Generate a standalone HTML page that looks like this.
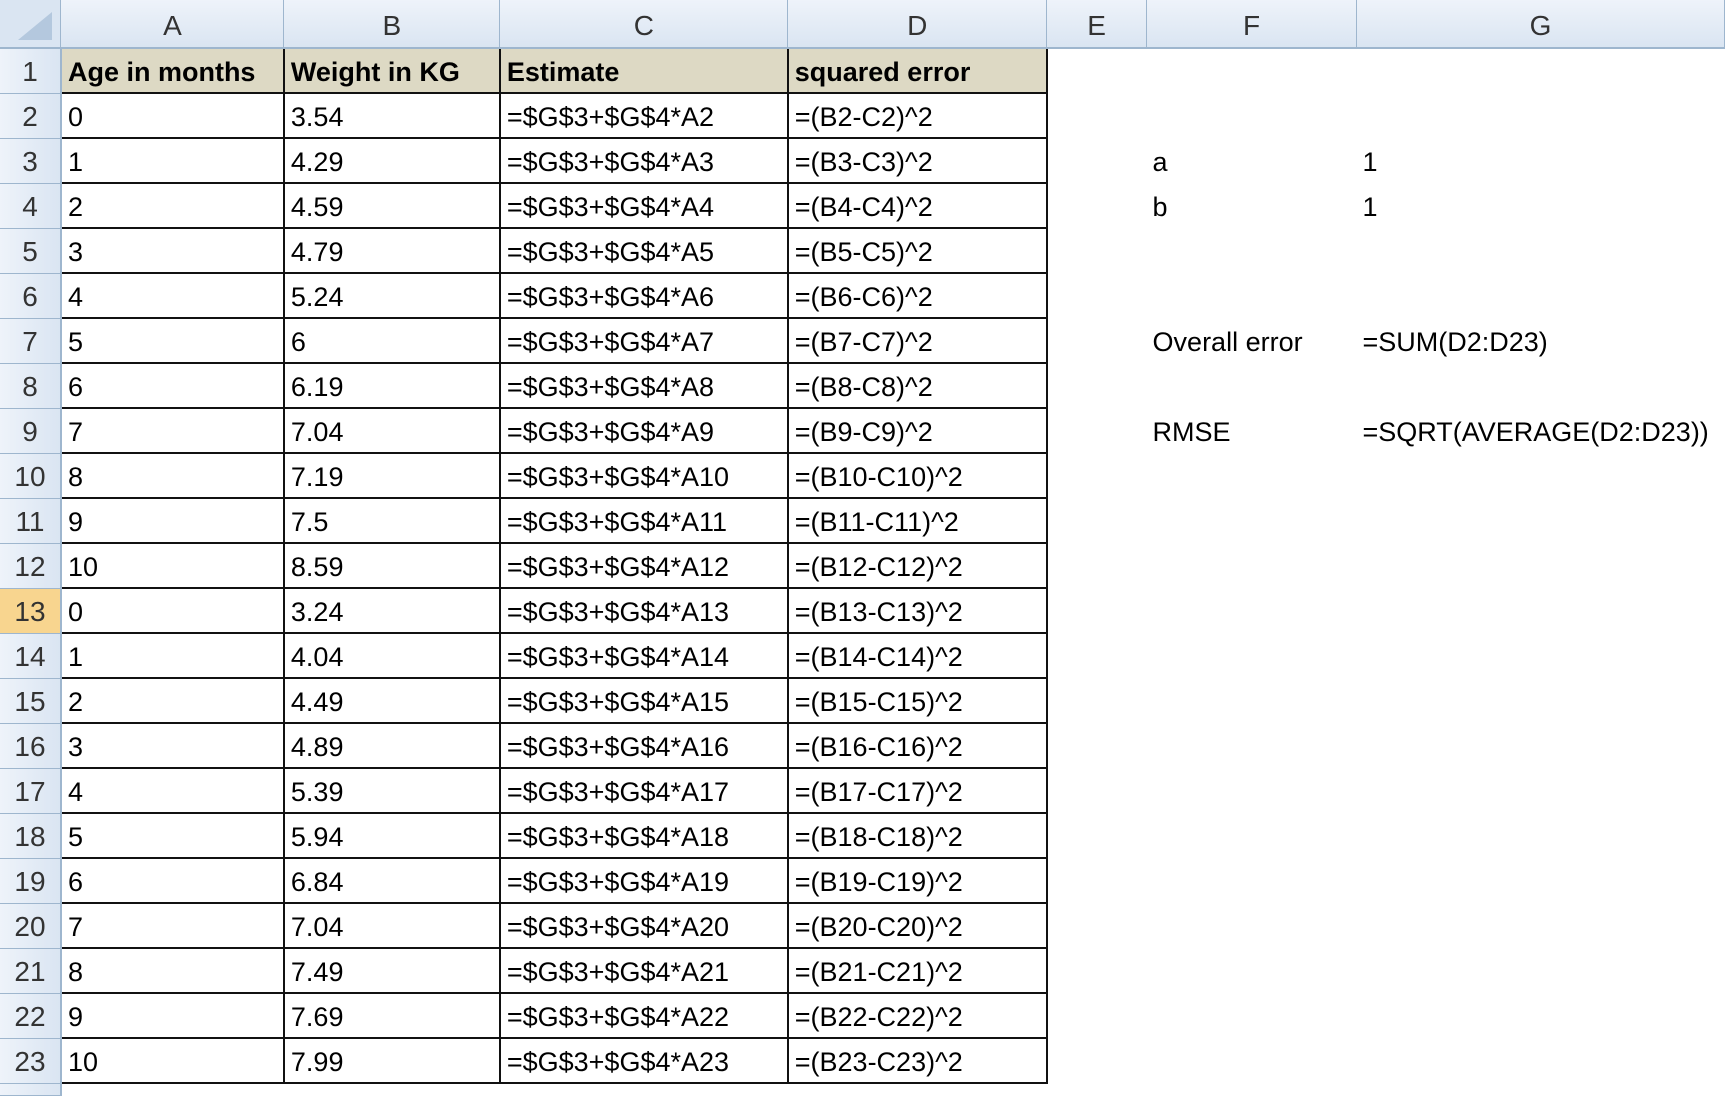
<!DOCTYPE html>
<html><head><style>
body{margin:0;width:1725px;height:1094px;overflow:hidden;background:#fff;font-family:"Liberation Sans",sans-serif;}
table{border-collapse:collapse;table-layout:fixed;position:absolute;left:0;top:0;}
td{padding:3px 0 0 6px;height:45px;font-size:27px;color:#000;white-space:nowrap;overflow:hidden;box-sizing:border-box;}
tr.h td{height:48px;background:linear-gradient(#eef3fa,#dae5f2);border-right:1px solid #9eb6ce;border-bottom:2px solid #9eb6ce;text-align:center;padding:4px 0 0;color:#333;font-size:28px}
td.r{background:linear-gradient(90deg,#eef3fa,#dae5f2);border-bottom:1px solid #9eb6ce;border-right:2px solid #9eb6ce;text-align:center;padding:3px 0 0;color:#333;font-size:28px}
td.r.sel{background:#f8d58f;}
td.g{border:2px solid #111;}
tr.one td.g{background:#ddd9c4;font-weight:bold;}
</style></head><body>
<table>
<colgroup><col style="width:61px"><col style="width:223px"><col style="width:216px"><col style="width:288px"><col style="width:259px"><col style="width:100px"><col style="width:210px"><col style="width:368px"></colgroup>
<tr class="h"><td style="background:#dae5f2"></td><td>A</td><td>B</td><td>C</td><td>D</td><td>E</td><td>F</td><td>G</td></tr>
<tr class="one"><td class="r">1</td><td class="g">Age in months</td><td class="g">Weight in KG</td><td class="g">Estimate</td><td class="g">squared error</td><td></td><td></td><td></td></tr>
<tr><td class="r">2</td><td class="g">0</td><td class="g">3.54</td><td class="g">=$G$3+$G$4*A2</td><td class="g">=(B2-C2)^2</td><td></td><td></td><td></td></tr>
<tr><td class="r">3</td><td class="g">1</td><td class="g">4.29</td><td class="g">=$G$3+$G$4*A3</td><td class="g">=(B3-C3)^2</td><td></td><td>a</td><td>1</td></tr>
<tr><td class="r">4</td><td class="g">2</td><td class="g">4.59</td><td class="g">=$G$3+$G$4*A4</td><td class="g">=(B4-C4)^2</td><td></td><td>b</td><td>1</td></tr>
<tr><td class="r">5</td><td class="g">3</td><td class="g">4.79</td><td class="g">=$G$3+$G$4*A5</td><td class="g">=(B5-C5)^2</td><td></td><td></td><td></td></tr>
<tr><td class="r">6</td><td class="g">4</td><td class="g">5.24</td><td class="g">=$G$3+$G$4*A6</td><td class="g">=(B6-C6)^2</td><td></td><td></td><td></td></tr>
<tr><td class="r">7</td><td class="g">5</td><td class="g">6</td><td class="g">=$G$3+$G$4*A7</td><td class="g">=(B7-C7)^2</td><td></td><td>Overall error</td><td>=SUM(D2:D23)</td></tr>
<tr><td class="r">8</td><td class="g">6</td><td class="g">6.19</td><td class="g">=$G$3+$G$4*A8</td><td class="g">=(B8-C8)^2</td><td></td><td></td><td></td></tr>
<tr><td class="r">9</td><td class="g">7</td><td class="g">7.04</td><td class="g">=$G$3+$G$4*A9</td><td class="g">=(B9-C9)^2</td><td></td><td>RMSE</td><td>=SQRT(AVERAGE(D2:D23))</td></tr>
<tr><td class="r">10</td><td class="g">8</td><td class="g">7.19</td><td class="g">=$G$3+$G$4*A10</td><td class="g">=(B10-C10)^2</td><td></td><td></td><td></td></tr>
<tr><td class="r">11</td><td class="g">9</td><td class="g">7.5</td><td class="g">=$G$3+$G$4*A11</td><td class="g">=(B11-C11)^2</td><td></td><td></td><td></td></tr>
<tr><td class="r">12</td><td class="g">10</td><td class="g">8.59</td><td class="g">=$G$3+$G$4*A12</td><td class="g">=(B12-C12)^2</td><td></td><td></td><td></td></tr>
<tr><td class="r sel">13</td><td class="g">0</td><td class="g">3.24</td><td class="g">=$G$3+$G$4*A13</td><td class="g">=(B13-C13)^2</td><td></td><td></td><td></td></tr>
<tr><td class="r">14</td><td class="g">1</td><td class="g">4.04</td><td class="g">=$G$3+$G$4*A14</td><td class="g">=(B14-C14)^2</td><td></td><td></td><td></td></tr>
<tr><td class="r">15</td><td class="g">2</td><td class="g">4.49</td><td class="g">=$G$3+$G$4*A15</td><td class="g">=(B15-C15)^2</td><td></td><td></td><td></td></tr>
<tr><td class="r">16</td><td class="g">3</td><td class="g">4.89</td><td class="g">=$G$3+$G$4*A16</td><td class="g">=(B16-C16)^2</td><td></td><td></td><td></td></tr>
<tr><td class="r">17</td><td class="g">4</td><td class="g">5.39</td><td class="g">=$G$3+$G$4*A17</td><td class="g">=(B17-C17)^2</td><td></td><td></td><td></td></tr>
<tr><td class="r">18</td><td class="g">5</td><td class="g">5.94</td><td class="g">=$G$3+$G$4*A18</td><td class="g">=(B18-C18)^2</td><td></td><td></td><td></td></tr>
<tr><td class="r">19</td><td class="g">6</td><td class="g">6.84</td><td class="g">=$G$3+$G$4*A19</td><td class="g">=(B19-C19)^2</td><td></td><td></td><td></td></tr>
<tr><td class="r">20</td><td class="g">7</td><td class="g">7.04</td><td class="g">=$G$3+$G$4*A20</td><td class="g">=(B20-C20)^2</td><td></td><td></td><td></td></tr>
<tr><td class="r">21</td><td class="g">8</td><td class="g">7.49</td><td class="g">=$G$3+$G$4*A21</td><td class="g">=(B21-C21)^2</td><td></td><td></td><td></td></tr>
<tr><td class="r">22</td><td class="g">9</td><td class="g">7.69</td><td class="g">=$G$3+$G$4*A22</td><td class="g">=(B22-C22)^2</td><td></td><td></td><td></td></tr>
<tr><td class="r">23</td><td class="g">10</td><td class="g">7.99</td><td class="g">=$G$3+$G$4*A23</td><td class="g">=(B23-C23)^2</td><td></td><td></td><td></td></tr>
<tr><td class="r" style="height:12px"></td><td colspan="7" style="height:12px"></td></tr>
</table>
<svg style="position:absolute;left:8px;top:8px" width="48" height="36"><polygon points="44,4 44,32 10,32" fill="#b4c8de"/></svg>
</body></html>
